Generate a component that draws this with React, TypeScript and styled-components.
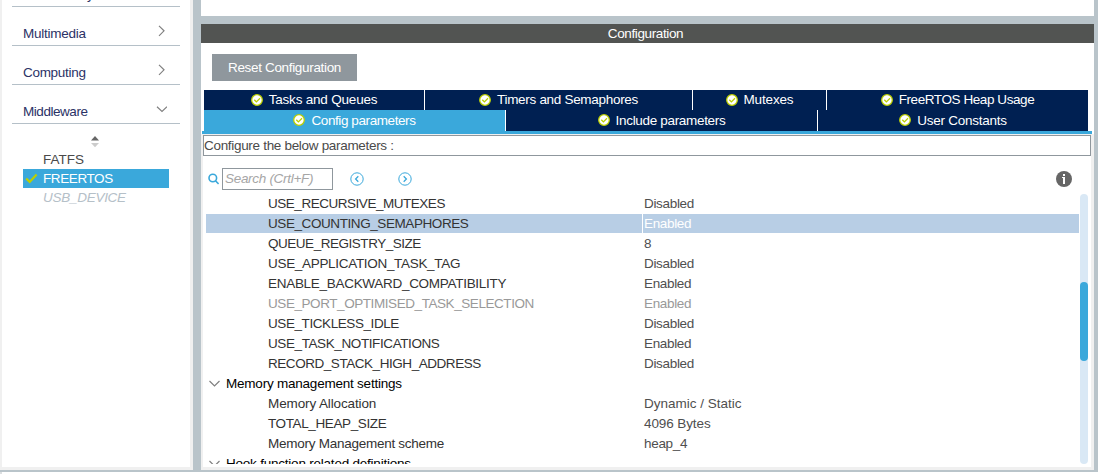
import React from "react";
import styled, { createGlobalStyle } from "styled-components";

const GlobalStyle = createGlobalStyle`
  * { box-sizing: border-box; }
  body { margin: 0; background: #fff; font: 13.5px/20px "Liberation Sans", Arial, sans-serif; color: #4a4a4a; }
`;

const Window = styled.div`
  width: 1098px;
  height: 474px;
  display: flex;
  flex-direction: column;
  overflow: hidden;
`;
const Workspace = styled.div`
  display: flex;
  height: 472px;
  padding: 0 4px 2px 0;
  background: #b9c4ca;
`;
const StatusStrip = styled.div`
  height: 2px;
  width: 100%;
  border-left: 2px solid #dcdfe1;
  background: #fff;
`;

const Sidebar = styled.nav`
  width: 193px;
  height: 470px;
  margin-right: 8px;
  padding-left: 10px;
  background: #fff;
  border: solid #f0f0f0;
  border-width: 0 3px 3px 2px;
  overflow: hidden;
`;
const Categories = styled.div`
  margin-top: -32px;
`;
const Category = styled.div`
  width: 168px;
  height: 39px;
  padding: 17px 13px 0 11px;
  display: flex;
  justify-content: space-between;
  border-bottom: 1px solid #b5c0c8;
  color: #2b3266;
  line-height: 20px;
`;
const Chevron = styled.svg`
  display: block;
  width: 11px;
  height: 12px;
  margin-top: 1px;
  flex: none;
  fill: none;
  stroke: #808080;
  stroke-width: 1.2;
`;
const GroupChevron = styled(Chevron)`
  margin-top: 4px;
`;
const SortArrows = styled.svg`
  display: block;
  width: 8px;
  height: 12px;
  margin: 12px 0 2px 79px;
`;
const Item = styled.div<{ $state?: "active" | "off" }>`
  width: 146px;
  height: 19px;
  margin-left: 11px;
  padding-left: 2px;
  display: flex;
  align-items: center;
  line-height: 19px;
  background: ${(p) => (p.$state === "active" ? "#3aa8db" : "transparent")};
  color: ${(p) => (p.$state === "active" ? "#fff" : p.$state === "off" ? "#b5c0c8" : "#4a4a4a")};
  font-style: ${(p) => (p.$state === "off" ? "italic" : "normal")};
`;
const ItemMark = styled.span`
  width: 18px;
  display: flex;
`;

const Main = styled.main`
  flex: 1;
  display: flex;
  flex-direction: column;
`;
const UpperPanel = styled.div`
  height: 16px;
  margin-bottom: 8px;
  background: #fff;
`;
const TitleBar = styled.div`
  height: 19px;
  text-align: center;
  line-height: 19px;
  padding-right: 4px;
  background: #525452;
  color: #fff;
`;
const Panel = styled.section`
  height: 427px;
  display: flex;
  flex-direction: column;
  background: #fff;
`;
const ResetButton = styled.button`
  width: 145px;
  height: 27px;
  margin: 11px 0 9px 11px;
  padding: 0;
  border: 0;
  background: #8f979d;
  color: #fff;
  font: inherit;
`;
const TabRow = styled.div<{ $columns: string; $last?: boolean }>`
  display: grid;
  grid-template-columns: ${(p) => p.$columns};
  column-gap: 1px;
  width: 884px;
  height: ${(p) => (p.$last ? 21 : 19)}px;
  margin: 0 0 ${(p) => (p.$last ? 0 : 1)}px 3px;
  line-height: ${(p) => (p.$last ? 21 : 20)}px;
`;
const TabButton = styled.div<{ $active?: boolean }>`
  display: flex;
  justify-content: center;
  gap: 6px;
  background: ${(p) => (p.$active ? "#3aa8db" : "#002052")};
  color: #fff;
`;
const TabMark = styled.svg`
  width: 12px;
  height: 12px;
  margin-top: 4px;
  flex: none;
`;
const TabRule = styled.div`
  height: 3px;
  margin: 0 2px 0 1px;
  background: #3aa8db;
`;
const Body = styled.div`
  flex: 1;
  border: solid #f0f0f0;
  border-width: 1px 3px 3px 2px;
`;
const Hint = styled.div`
  height: 21px;
  line-height: 19px;
  border: 1px solid #8f979d;
`;
const Toolbar = styled.div`
  height: 38px;
  padding: 12px 19px 4px 5px;
  display: flex;
  align-items: center;
`;
const SearchField = styled.div`
  width: 111px;
  height: 22px;
  margin: 0 17px 0 3px;
  padding-left: 2px;
  line-height: 20px;
  border: 1px solid #8f979d;
  color: #a6a6a6;
  font-style: italic;
`;
const StepIcon = styled.svg`
  width: 14px;
  height: 14px;
  margin-right: 34px;
  fill: none;
  stroke: #3aa8db;
`;
const InfoIcon = styled.svg`
  width: 16px;
  height: 16px;
  margin-left: auto;
`;
const ListArea = styled.div`
  display: flex;
  height: 270px;
  padding-left: 3px;
`;
const List = styled.div`
  width: 873px;
  height: 270px;
  margin-right: 1px;
  overflow: hidden;
`;
const Row = styled.div`
  display: grid;
  grid-template-columns: 436px 1fr;
  column-gap: 1px;
  height: 19px;
  margin-bottom: 1px;
  line-height: 19px;
`;
const NameCell = styled.div<{ $selected?: boolean; $disabled?: boolean }>`
  padding-left: 62px;
  background: ${(p) => (p.$selected ? "#b8cee5" : "transparent")};
  color: ${(p) => (p.$disabled ? "#999" : "#333")};
`;
const ValueCell = styled.div<{ $selected?: boolean; $disabled?: boolean }>`
  padding-left: 1px;
  background: ${(p) => (p.$selected ? "#b8cee5" : "transparent")};
  color: ${(p) => (p.$selected ? "#fff" : p.$disabled ? "#999" : "#4f4f4f")};
`;
const GroupRow = styled.div`
  height: 20px;
  padding-left: 3px;
  display: flex;
  gap: 6px;
  line-height: 19px;
  color: #000;
`;
const ScrollTrack = styled.div`
  width: 8px;
  height: 270px;
  padding-top: 88px;
  border-radius: 4px;
  background: #d9e8f5;
`;
const ScrollThumb = styled.div`
  height: 79px;
  border-radius: 4px;
  background: #3aa8db;
`;
const Label = styled.span<{ $spacing?: number }>`
  letter-spacing: ${(p) => p.$spacing ?? 0}px;
  white-space: pre;
`;

const Check = () => (
  <TabMark viewBox="0 0 12 12">
    <circle cx="6" cy="6" r="5.3" fill="#fff" stroke="#bccf00" strokeWidth="1.3" />
    <path d="M3.3 5.8 5.4 7.9 9 4.3" fill="none" stroke="#bccf00" strokeWidth="1.3" />
  </TabMark>
);

const Tab = ({ text, spacing, active }: { text: string; spacing: number; active?: boolean }) => (
  <TabButton $active={active}>
    <Check />
    <Label $spacing={spacing}>{text}</Label>
  </TabButton>
);

type Param = { name: string; value: string; ns: number; vs: number; selected?: boolean; disabled?: boolean };

const kernel: Param[] = [
  { name: "USE_RECURSIVE_MUTEXES", ns: -0.47, value: "Disabled", vs: -0.32 },
  { name: "USE_COUNTING_SEMAPHORES", ns: -0.42, value: "Enabled", vs: -0.35, selected: true },
  { name: "QUEUE_REGISTRY_SIZE", ns: -0.47, value: "8", vs: 0 },
  { name: "USE_APPLICATION_TASK_TAG", ns: -0.31, value: "Disabled", vs: -0.32 },
  { name: "ENABLE_BACKWARD_COMPATIBILITY", ns: -0.29, value: "Enabled", vs: -0.35 },
  { name: "USE_PORT_OPTIMISED_TASK_SELECTION", ns: -0.43, value: "Enabled", vs: -0.35, disabled: true },
  { name: "USE_TICKLESS_IDLE", ns: -0.42, value: "Disabled", vs: -0.32 },
  { name: "USE_TASK_NOTIFICATIONS", ns: -0.4, value: "Enabled", vs: -0.35 },
  { name: "RECORD_STACK_HIGH_ADDRESS", ns: -0.45, value: "Disabled", vs: -0.32 },
];
const memory: Param[] = [
  { name: "Memory Allocation", ns: -0.12, value: "Dynamic / Static", vs: 0 },
  { name: "TOTAL_HEAP_SIZE", ns: -0.38, value: "4096 Bytes", vs: -0.1 },
  { name: "Memory Management scheme", ns: -0.26, value: "heap_4", vs: -0.3 },
];

const categories = [
  { name: "Connectivity", spacing: -0.25 },
  { name: "Multimedia", spacing: -0.25 },
  { name: "Computing", spacing: -0.3 },
  { name: "Middleware", spacing: -0.45, open: true },
];

const ParamRow = ({ p }: { p: Param }) => (
  <Row>
    <NameCell $selected={p.selected} $disabled={p.disabled}>
      <Label $spacing={p.ns}>{p.name}</Label>
    </NameCell>
    <ValueCell $selected={p.selected} $disabled={p.disabled}>
      <Label $spacing={p.vs}>{p.value}</Label>
    </ValueCell>
  </Row>
);

const Group = ({ text, spacing }: { text: string; spacing: number }) => (
  <GroupRow>
    <GroupChevron viewBox="0 0 11 12">
      <path d="M.5 3 5.5 8 10.5 3" />
    </GroupChevron>
    <Label $spacing={spacing}>{text}</Label>
  </GroupRow>
);

export default function App() {
  return (
    <Window>
      <GlobalStyle />
      <Workspace>
        <Sidebar>
          <Categories>
            {categories.map((c) => (
              <Category key={c.name}>
                <Label $spacing={c.spacing}>{c.name}</Label>
                <Chevron viewBox="0 0 11 12">
                  <path d={c.open ? "M1 3.8 6 8.4 11 3.8" : "M3 .8 8 5.8 3 10.8"} />
                </Chevron>
              </Category>
            ))}
          </Categories>
          <SortArrows viewBox="0 0 8 12">
            <path d="M0 4.5 4 0 8 4.5Z" fill="#666" />
            <path d="M0 7 8 7 4 11.3Z" fill="#ccc" />
          </SortArrows>
          <Item>
            <ItemMark />
            <Label>FATFS</Label>
          </Item>
          <Item $state="active">
            <ItemMark>
              <svg width="13" height="11" viewBox="0 0 13 11">
                <path d="M1.2 5.5 4.7 9 11.6 1.5" fill="none" stroke="#bccf00" strokeWidth="2.2" />
              </svg>
            </ItemMark>
            <Label $spacing={-0.4}>FREERTOS</Label>
          </Item>
          <Item $state="off">
            <ItemMark />
            <Label $spacing={-0.27}>USB_DEVICE</Label>
          </Item>
        </Sidebar>
        <Main>
          <UpperPanel />
          <TitleBar>
            <Label $spacing={-0.38}>Configuration</Label>
          </TitleBar>
          <Panel>
            <ResetButton>
              <Label $spacing={-0.33}>Reset Configuration</Label>
            </ResetButton>
            <TabRow $columns="220px 267px 133px 1fr">
              <Tab text="Tasks and Queues" spacing={-0.2} />
              <Tab text="Timers and Semaphores" spacing={-0.3} />
              <Tab text="Mutexes" spacing={-0.15} />
              <Tab text="FreeRTOS Heap Usage" spacing={-0.42} />
            </TabRow>
            <TabRow $columns="301px 311px 1fr" $last>
              <Tab text="Config parameters" spacing={-0.41} active />
              <Tab text="Include parameters" spacing={-0.32} />
              <Tab text="User Constants" spacing={-0.27} />
            </TabRow>
            <TabRule />
            <Body>
              <Hint>
                <Label $spacing={-0.31}>Configure the below parameters :</Label>
              </Hint>
              <Toolbar>
                <svg width="11" height="12" viewBox="0 0 11 12" fill="none" stroke="#3aa8db" strokeWidth="1.6">
                  <circle cx="4.8" cy="5" r="3.8" />
                  <path d="M7.5 7.8 10.6 11" />
                </svg>
                <SearchField>
                  <Label $spacing={-0.3}>Search (Crtl+F)</Label>
                </SearchField>
                <StepIcon viewBox="0 0 14 14">
                  <circle cx="7" cy="7" r="6.2" />
                  <path d="M8.3 4.2 5.6 7 8.3 9.8" strokeWidth="1.3" />
                </StepIcon>
                <StepIcon viewBox="0 0 14 14">
                  <circle cx="7" cy="7" r="6.2" />
                  <path d="M5.7 4.2 8.4 7 5.7 9.8" strokeWidth="1.3" />
                </StepIcon>
                <InfoIcon viewBox="0 0 16 16">
                  <circle cx="8" cy="8" r="8" fill="#666" />
                  <path d="M7 3h2v2H7zM6 6h3v7H7V7H6z" fill="#fff" />
                </InfoIcon>
              </Toolbar>
              <ListArea>
                <List>
                  {kernel.map((p) => (
                    <ParamRow key={p.name} p={p} />
                  ))}
                  <Group text="Memory management settings" spacing={-0.22} />
                  {memory.map((p) => (
                    <ParamRow key={p.name} p={p} />
                  ))}
                  <Group text="Hook function related definitions" spacing={-0.22} />
                </List>
                <ScrollTrack>
                  <ScrollThumb />
                </ScrollTrack>
              </ListArea>
            </Body>
          </Panel>
        </Main>
      </Workspace>
      <StatusStrip />
    </Window>
  );
}
